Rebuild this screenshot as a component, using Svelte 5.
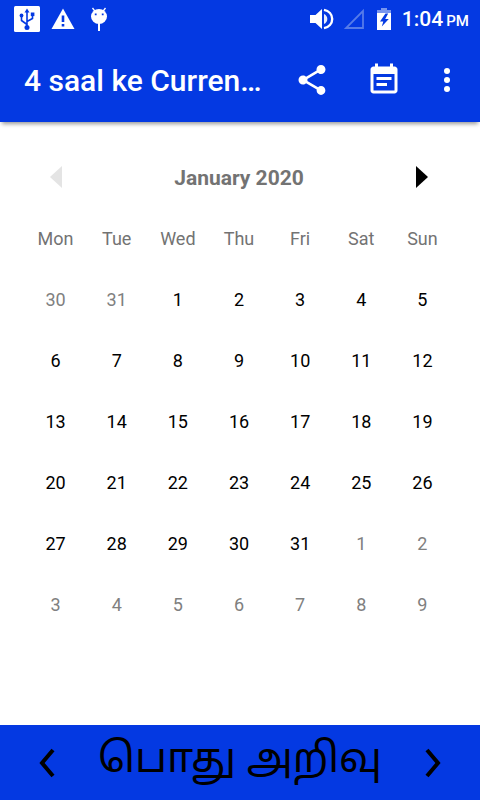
<script lang="ts">
  type Day = { num: number; other: boolean };

  const weekdays = ['Mon', 'Tue', 'Wed', 'Thu', 'Fri', 'Sat', 'Sun'];
  const months = ['January', 'February', 'March', 'April', 'May', 'June',
    'July', 'August', 'September', 'October', 'November', 'December'];
  const year = 2020;

  let month = $state(0);
  let weeks = $derived(buildWeeks(year, month));

  // always six rows, Monday first
  function buildWeeks(y: number, m: number): Day[][] {
    const lead = (new Date(y, m, 1).getDay() + 6) % 7;
    return Array.from({ length: 6 }, (_, w) =>
      Array.from({ length: 7 }, (_, d) => {
        const date = new Date(y, m, 1 - lead + w * 7 + d);
        return { num: date.getDate(), other: date.getMonth() !== m };
      })
    );
  }
</script>

<div class="screen">
  <div class="status">
    <div class="notifications">
      <svg width="26" height="26" viewBox="0 0 26 26">
        <rect width="26" height="26" rx="1.5" fill="#fff" />
        <g fill="none" stroke="#0439e2" stroke-width="1.6">
          <path d="M13 5v17M13 18.500L7.500 14.500v-4M13 15.500l5.500-3v-4" />
        </g>
        <g fill="#0439e2">
          <path d="M13 2.500l2.500 4h-5z" />
          <circle cx="13" cy="21.500" r="2.500" />
          <circle cx="7.500" cy="9.500" r="1.900" />
          <path d="M16.800 6.500h3.600v3.600h-3.600z" />
        </g>
      </svg>
      <svg width="24" height="26" viewBox="0 0 24 26">
        <path fill="#fff" d="M12 2.500L23.500 23H.500z" />
        <path fill="#0439e2" d="M10.700 9.500h2.600v6.500h-2.600zM10.700 18h2.600v2.600h-2.600z" />
      </svg>
      <svg width="18" height="26" viewBox="0 0 18 26">
        <path stroke="#fff" stroke-width="1.300" d="M2.500 2l3 4M15.500 2l-3 4" />
        <ellipse cx="9" cy="10.500" rx="8" ry="7.500" fill="#fff" />
        <path stroke="#fff" stroke-width="2" d="M9 17v8" />
        <path fill="#0439e2" d="M4.800 7.500h1.800v1.800H4.800zM11.800 7.500h1.800v1.800h-1.800z" />
      </svg>
    </div>
    <div class="system">
      <svg width="24" height="24" viewBox="0 0 24 24">
        <path fill="#fff" d="M0 8v8h5.500l6.500 6V2L5.500 8z" />
        <path fill="#fff" opacity=".9" d="M14 7v10c2-.8 3.300-2.700 3.300-5S16 7.800 14 7z" />
        <path fill="none" stroke="#fff" stroke-width="2.400" d="M14 2.800c4.800 1 8.200 4.700 8.200 9.200s-3.400 8.200-8.200 9.200" />
      </svg>
      <svg class="signal" width="22" height="22" viewBox="0 0 22 22">
        <path fill="none" stroke="#567be9" stroke-width="1.800" d="M20 3v17H3z" />
      </svg>
      <svg class="battery" width="14" height="22" viewBox="0 0 14 22">
        <path fill="#7895ee" d="M4 0h6v2h4v4H0V2h4z" />
        <path fill="#fff" d="M0 5h14v17H0z" />
        <path fill="#0439e2" d="M8.500 5.500L3 13.500h3.300L4.800 18.500l7-7.500H8.200l3-5.500z" />
      </svg>
      <span class="clock">1:04 <small>PM</small></span>
    </div>
  </div>

  <header>
    <h1>4 saal ke Curren…</h1>
    <button class="share" aria-label="Share">
      <svg width="36" height="36" viewBox="0 0 24 24" fill="#fff">
        <path d="M18 16.080c-.76 0-1.440.3-1.960.77L8.910 12.700c.05-.23.09-.46.09-.7s-.04-.47-.09-.7l7.050-4.110c.54.5 1.250.81 2.040.81 1.660 0 3-1.340 3-3s-1.340-3-3-3-3 1.340-3 3c0 .24.04.47.09.7L8.040 9.810C7.500 9.310 6.790 9 6 9c-1.660 0-3 1.340-3 3s1.340 3 3 3c.79 0 1.500-.31 2.040-.81l7.120 4.160c-.05.21-.08.43-.08.650 0 1.610 1.310 2.920 2.920 2.920s2.920-1.310 2.920-2.920-1.310-2.920-2.920-2.920z" />
      </svg>
    </button>
    <button class="events" aria-label="Events">
      <svg width="36" height="36" viewBox="0 0 24 24" fill="#fff">
        <path d="M17 10H7v2h10v-2zm2-7h-1V1h-2v2H8V1H6v2H5c-1.110 0-1.990.9-1.990 2L3 19c0 1.100.89 2 2 2h14c1.100 0 2-.9 2-2V5c0-1.100-.9-2-2-2zm0 16H5V8h14v11zm-5-5H7v2h7v-2z" />
      </svg>
    </button>
    <button class="more" aria-label="More options">
      <svg width="8" height="26" viewBox="0 0 8 26" fill="#fff">
        <circle cx="4" cy="4" r="3" />
        <circle cx="4" cy="13" r="3" />
        <circle cx="4" cy="22" r="3" />
      </svg>
    </button>
  </header>

  <main>
    <div class="month">
      <button aria-label="Previous month" disabled={month === 0} onclick={() => (month -= 1)}>
        <svg width="12" height="24" viewBox="0 0 12 24"><path d="M12 0v22L0 11z" /></svg>
      </button>
      <h2>{months[month]} {year}</h2>
      <button aria-label="Next month" disabled={month === 11} onclick={() => (month += 1)}>
        <svg width="12" height="24" viewBox="0 0 12 24"><path d="M0 0v22l12-11z" /></svg>
      </button>
    </div>
    <table>
      <thead>
        <tr>
          {#each weekdays as name}
            <th scope="col">{name}</th>
          {/each}
        </tr>
      </thead>
      <tbody>
        {#each weeks as week}
          <tr>
            {#each week as day}
              <td class:other={day.other}>{day.num}</td>
            {/each}
          </tr>
        {/each}
      </tbody>
    </table>
  </main>

  <footer>
    <button aria-label="Previous">
      <svg width="18" height="32" viewBox="0 0 18 32">
        <path d="M15 3L4 16l11 13" />
      </svg>
    </button>
    <span class="topic" lang="ta">பொது அறிவு</span>
    <button aria-label="Next">
      <svg width="18" height="32" viewBox="0 0 18 32">
        <path d="M3 3l11 13L3 29" />
      </svg>
    </button>
  </footer>
</div>

<style>
  :global(body) {
    margin: 0;
    background: #fff;
  }

  .screen {
    display: flex;
    flex-direction: column;
    min-height: 100vh;
    font-family: Roboto, sans-serif;
  }

  button {
    display: flex;
    align-items: center;
    justify-content: center;
    padding: 0;
    border: 0;
    background: none;
    cursor: pointer;
  }

  svg {
    display: block;
    flex: none;
  }

  .status {
    display: flex;
    align-items: center;
    justify-content: space-between;
    height: 38px;
    padding: 0 11px 0 14px;
    background: #0439e2;
    color: #fff;
  }

  .notifications,
  .system {
    display: flex;
    align-items: center;
  }

  .notifications {
    gap: 11px;
  }

  .notifications svg:last-child {
    margin-left: 4px;
  }

  .signal {
    margin-left: 9px;
  }

  .battery {
    margin-left: 12px;
  }

  .clock {
    padding-top: 2px;
    margin-left: 11px;
    font-size: 21px;
    font-weight: 500;
    line-height: 36px;
    white-space: nowrap;
  }

  .clock small {
    margin-left: -2px;
    font-size: 15px;
  }

  header {
    display: flex;
    align-items: center;
    height: 84px;
    padding: 0 6px 0 24px;
    background: #0439e2;
    color: #fff;
    box-shadow: 0 4px 4px -2px rgba(0, 0, 0, 0.4);
  }

  h1 {
    flex: 1;
    padding-top: 2px;
    margin: 0;
    font-size: 30px;
    font-weight: 500;
    line-height: 36px;
    white-space: nowrap;
  }

  .share,
  .events {
    width: 72px;
    height: 72px;
  }

  .more {
    width: 54px;
    height: 72px;
  }

  main {
    flex: 1;
    padding: 25px 27px 0 25px;
  }

  .month {
    display: flex;
    align-items: center;
    justify-content: space-between;
    height: 61px;
  }

  .month button {
    width: 61px;
    height: 61px;
  }

  .month button:disabled {
    opacity: 0.1;
    cursor: default;
  }

  h2 {
    margin: 0;
    color: #737373;
    font-size: 21px;
    font-weight: 700;
  }

  table {
    width: 100%;
    border-collapse: collapse;
    table-layout: fixed;
  }

  th,
  td {
    height: 61px;
    padding: 0;
    color: #000;
    font-size: 18px;
    font-weight: 400;
    text-align: center;
  }

  th {
    color: #737373;
  }

  .other {
    color: #808080;
  }

  footer {
    display: flex;
    align-items: center;
    justify-content: space-between;
    height: 75px;
    padding: 0 24px;
    background: #0439e2;
  }

  footer button {
    width: 46px;
    height: 75px;
  }

  footer path {
    fill: none;
    stroke: #000;
    stroke-width: 4;
  }

  .topic {
    padding-bottom: 2px;
    font-family: 'Noto Sans Tamil', 'Noto Sans', sans-serif;
    font-size: 41px;
    line-height: 64px;
    white-space: nowrap;
  }
</style>
